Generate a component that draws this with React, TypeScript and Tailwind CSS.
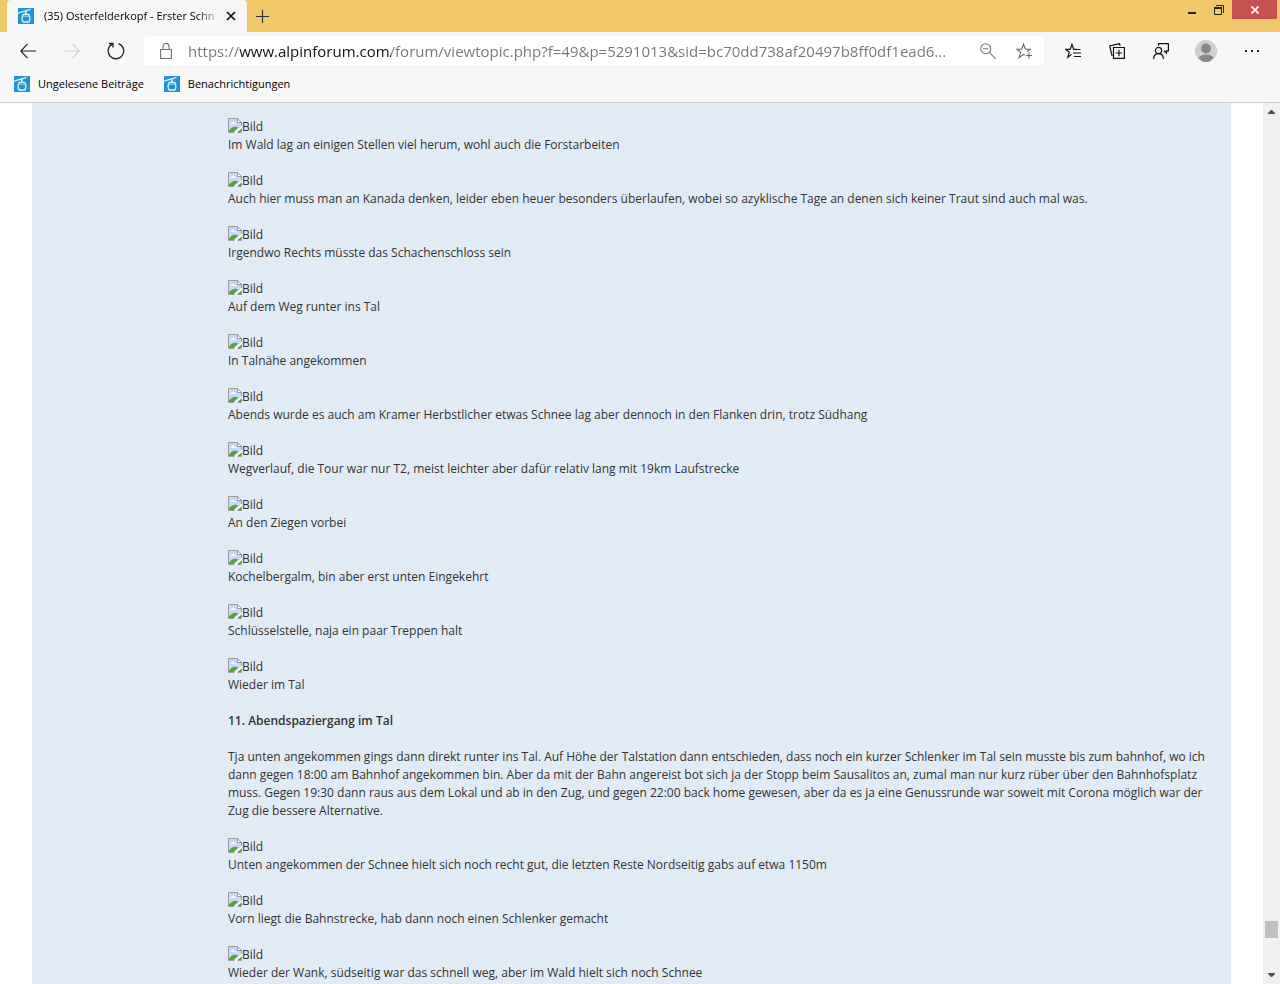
const captionsBefore = [
  "Im Wald lag an einigen Stellen viel herum, wohl auch die Forstarbeiten",
  "Auch hier muss man an Kanada denken, leider eben heuer besonders überlaufen, wobei so azyklische Tage an denen sich keiner Traut sind auch mal was.",
  "Irgendwo Rechts müsste das Schachenschloss sein",
  "Auf dem Weg runter ins Tal",
  "In Talnähe angekommen",
  "Abends wurde es auch am Kramer Herbstlicher etwas Schnee lag aber dennoch in den Flanken drin, trotz Südhang",
  "Wegverlauf, die Tour war nur T2, meist leichter aber dafür relativ lang mit 19km Laufstrecke",
  "An den Ziegen vorbei",
  "Kochelbergalm, bin aber erst unten Eingekehrt",
  "Schlüsselstelle, naja ein paar Treppen halt",
  "Wieder im Tal",
];

const captionsAfter = [
  "Unten angekommen der Schnee hielt sich noch recht gut, die letzten Reste Nordseitig gabs auf etwa 1150m",
  "Vorn liegt die Bahnstrecke, hab dann noch einen Schlenker gemacht",
  "Wieder der Wank, südseitig war das schnell weg, aber im Wald hielt sich noch Schnee",
];

function Favicon() {
  return (
    <svg viewBox="0 0 16 16" className="w-4 h-4 shrink-0" fill="none">
      <rect width="16" height="16" fill="#2093d2" />
      <path d="M0 5.2 12.500 1.300" stroke="#d9f2fc" strokeWidth="1.4" />
      <path d="M7.800 3v3.500" stroke="#e8f8ff" strokeWidth="1.5" />
      <path
        d="M5.300 6.500h5.400q1.200 1.500 1.200 3.800T10.700 14H5.300q-1.200-1.400-1.200-3.700T5.300 6.500Z"
        stroke="#d9f2fc"
        strokeWidth="1.3"
      />
      <path d="M4.800 8.500h6.400" stroke="#8fd0f0" strokeWidth=".8" />
    </svg>
  );
}

function BrokenImage() {
  return (
    <svg viewBox="0 0 14 15" className="w-3.5 h-[15px] shrink-0" fill="none">
      <path d="M.5.5h9l4 4v10H.5Z" fill="#c5d8f5" stroke="#9b9b9b" />
      <path d="M9.5.5v4h4Z" fill="#fff" stroke="#9b9b9b" />
      <path d="M2.5 6q.2-1.6 1.6-1.5Q5 2.900 6.300 4.200 7.800 4.400 7.500 6Z" fill="#fff" />
      <path d="M1 14v-1.500Q3.500 9 7.500 8.700q2 .2 2.500 1L5.500 14Z" fill="#4fa73c" />
      <path d="M14 7.500 6 15h2.500L14 10Z" fill="#fff" />
      <path d="M9.500 14 13 11v3Z" fill="#4fa73c" />
    </svg>
  );
}

function Picture({ caption }: { caption: string }) {
  return (
    <figure className="mb-[18px]">
      <div className="flex items-start h-[18px]">
        <BrokenImage />
        <span>Bild</span>
      </div>
      <figcaption>{caption}</figcaption>
    </figure>
  );
}

function TabBar() {
  return (
    <header className="flex h-8 shrink-0 bg-[#f0c869] pl-[7px] pr-[3px]">
      <div className="flex items-center w-60 bg-[#f7f7f7] rounded-t pl-[11px] pr-2">
        <Favicon />
        <span className="ml-2.5 flex-1 text-[11px] whitespace-nowrap mask-r-from-85%">
          (35) Osterfelderkopf - Erster Schn
        </span>
        <button aria-label="Tab schließen" className="w-4 h-4 flex items-center justify-center">
          <svg viewBox="0 0 10 10" className="w-2.5 h-2.5" stroke="#111" strokeWidth="1.7">
            <path d="m1 1 8 8M9 1 1 9" />
          </svg>
        </button>
      </div>
      <button aria-label="Neuer Tab" className="w-[30px] flex items-center justify-center">
        <svg viewBox="0 0 13 13" className="w-[13px] h-[13px]" stroke="#333" strokeWidth="1.2">
          <path d="M6.500 0v13M0 6.500h13" />
        </svg>
      </button>
      <div className="ml-auto flex h-[19px]">
        <button aria-label="Minimieren" className="w-[26px] flex items-center justify-center">
          <svg viewBox="0 0 8 10" className="w-2 h-2.5" fill="#222">
            <path d="M0 7h8v2H0Z" />
          </svg>
        </button>
        <button aria-label="Verkleinern" className="w-[27px] flex items-center justify-center">
          <svg viewBox="0 0 10 10" className="w-2.5 h-2.5" fill="none" stroke="#222">
            <path d="M.5 2.500h7v7h-7Z" />
            <path d="M0 3h8" strokeWidth="2" />
            <path d="M2 .5h7.500V8" />
          </svg>
        </button>
        <button aria-label="Schließen" className="w-[45px] flex items-center justify-center bg-[#c75050]">
          <svg viewBox="0 0 8 8" className="w-2 h-2" stroke="#fff" strokeWidth="1.700">
            <path d="m.5.5 7 7M7.500.5l-7 7" />
          </svg>
        </button>
      </div>
    </header>
  );
}

function AddressBar() {
  return (
    <div className="ml-2 flex flex-1 items-center h-[30px] bg-white rounded-sm shadow-xs pl-4 pr-3">
      <svg viewBox="0 0 12 16" className="w-3 h-4 shrink-0" fill="none" stroke="#707070" strokeWidth="1.100">
        <path d="M.6 6.500h10.800v9H.6ZM3 6.500V3.500a3 3 0 0 1 6 0v3" />
      </svg>
      {/* the gradient darkens only the host name */}
      <input
        type="text"
        aria-label="Adresse"
        readOnly
        value="https://www.alpinforum.com/forum/viewtopic.php?f=49&p=5291013&sid=bc70dd738af20497b8ff0df1ead6..."
        className="ml-4 mr-4 min-w-0 flex-1 outline-none text-[15px] text-transparent bg-clip-text bg-[linear-gradient(to_right,#757575_51px,#111_51px,#111_203px,#757575_203px)]"
      />
      <button aria-label="Zoom" className="mr-5">
        <svg viewBox="0 0 16 16" className="w-4 h-4" fill="none" stroke="#767676" strokeWidth="1.100">
          <circle cx="5.700" cy="5.700" r="5" />
          <path d="M3 5.700h5.400M9.300 9.300 15.700 15.700" />
        </svg>
      </button>
      <button aria-label="Zu Favoriten hinzufügen">
        <svg viewBox="0 0 16 16" className="w-4 h-4" fill="none" stroke="#666" strokeWidth="1.100">
          <path d="M8.800 12.300 7.500 11.500 3.100 14.600 4.700 9.300.8 6.200h4.900L7.500 1.200l1.900 5h4.900l-3.500 2.700" />
          <path d="M13 9.500v6M10 12.500h6" />
        </svg>
      </button>
    </div>
  );
}

function Toolbar() {
  return (
    <nav className="flex items-center h-[38px] pl-2 pr-[5px]">
      <div className="flex gap-1">
        <button aria-label="Zurück" className="w-10 flex items-center justify-center">
          <svg viewBox="0 0 16 16" className="w-4 h-4" fill="none" stroke="#222" strokeWidth="1.200">
            <path d="M7.500.8.8 8l6.700 7.200M.8 8H16" />
          </svg>
        </button>
        <button aria-label="Vorwärts" disabled className="w-10 flex items-center justify-center">
          <svg viewBox="0 0 16 16" className="w-4 h-4" fill="none" stroke="#cfcfcf" strokeWidth="1.200">
            <path d="m8.500.8 6.700 7.200-6.700 7.200M15.200 8H0" />
          </svg>
        </button>
        <button aria-label="Aktualisieren" className="w-10 flex items-center justify-center">
          <svg viewBox="0 0 18 18" className="w-[18px] h-[18px]" fill="none" stroke="#222" strokeWidth="1.300">
            <path d="M11.500 1.600a7.800 7.800 0 1 1-6.300.5M2 1.500h4v4" />
          </svg>
        </button>
      </div>
      <AddressBar />
      <div className="ml-[7px] flex">
        <button aria-label="Favoriten" className="w-11 flex items-center justify-center">
          <svg viewBox="0 0 16 16" className="w-4 h-4" fill="none" stroke="#111" strokeWidth="1.200">
            <path d="M6.500 11.400 2.800 14.300 4.300 9.300.8 6.400h4.400L6.900 1.300l1.800 5.100h3" />
            <path d="M9 6.500h6.500M8 10h8M9 13.500h7" />
          </svg>
        </button>
        <button aria-label="Sammlungen" className="w-11 flex items-center justify-center">
          <svg viewBox="0 0 16 16" className="w-4 h-4" fill="none" stroke="#111" strokeWidth="1.200">
            <path d="M4.500 4.500h10.900v10.900H4.500ZM10 6.800v6.400M6.800 10h6.400" />
            <path d="M3.200 13.200.6 3 10.500.6l.6 2.200" />
          </svg>
        </button>
        <button aria-label="Feedback senden" className="w-11 flex items-center justify-center">
          <svg viewBox="0 0 16 16" className="w-4 h-4" fill="none" stroke="#111" strokeWidth="1.200">
            <circle cx="5.500" cy="7.500" r="3.100" />
            <path d="M.6 16q.2-5.300 4.900-5.300t4.900 5.300M5.500 2.800V.6h9.900v7.200h-1.900v2.400l-2.500-2.400" />
          </svg>
        </button>
        <button aria-label="Profil" className="w-[46px] flex items-center justify-center">
          <svg viewBox="0 0 22 22" className="w-[22px] h-[22px]">
            <circle cx="11" cy="11" r="11" fill="#d2d0ce" />
            <circle cx="11" cy="8.500" r="5" fill="#8a8886" />
            <path d="M3.500 17.500q2.500-3 7.500-3t7.500 3Q15.500 22 11 22t-7.500-4.500Z" fill="#8a8886" />
          </svg>
        </button>
        <button aria-label="Einstellungen und mehr" className="w-[46px] flex items-center justify-center">
          <svg viewBox="0 0 16 4" className="w-4 h-1" fill="#222">
            <path d="M1 1h2v2H1ZM7 1h2v2H7ZM13 1h2v2h-2Z" />
          </svg>
        </button>
      </div>
    </nav>
  );
}

function Bookmarks() {
  return (
    <nav className="flex items-center gap-5 h-7 pl-3.5 text-[11px] text-black">
      <a href="#ungelesen" className="flex items-center gap-2">
        <Favicon />
        Ungelesene Beiträge
      </a>
      <a href="#benachrichtigungen" className="flex items-center gap-2">
        <Favicon />
        Benachrichtigungen
      </a>
    </nav>
  );
}

function ScrollBar() {
  return (
    <div className="w-[17px] shrink-0 flex flex-col items-center bg-[#f0f0f0] py-[7px]">
      <svg viewBox="0 0 7 4" className="w-[7px] h-1" fill="#505050">
        <path d="M3 0h1l3 3v1H0V3Z" />
      </svg>
      <div className="flex-1" />
      <div className="w-[13px] h-[17px] bg-[#c1c1c1] mb-[35px]" />
      <svg viewBox="0 0 7 4" className="w-[7px] h-1" fill="#505050">
        <path d="M3 4h1l3-3V0H0v1Z" />
      </svg>
    </div>
  );
}

export default function App() {
  return (
    <div className="h-screen flex flex-col overflow-hidden bg-white font-['Open_Sans','Noto_Sans',sans-serif]">
      <TabBar />
      <div className="shrink-0 bg-[#f7f7f7] border-b border-[#cccccc] pb-1">
        <Toolbar />
        <Bookmarks />
      </div>
      <div className="flex flex-1 min-h-0">
        <main className="flex-1 min-w-0 ml-8 mr-8 bg-[#e1ebf5] overflow-hidden">
          <article className="ml-49 mr-1 pt-[15px] text-xs leading-[18px] text-[#333333]">
            {captionsBefore.map((caption) => (
              <Picture key={caption} caption={caption} />
            ))}
            <h3 className="font-semibold mb-[18px]">11. Abendspaziergang im Tal</h3>
            <p className="mb-[18px]">
              Tja unten angekommen gings dann direkt runter ins Tal. Auf Höhe der Talstation dann entschieden, dass noch ein kurzer Schlenker im Tal sein musste bis zum bahnhof, wo ich
              <br />
              dann gegen 18:00 am Bahnhof angekommen bin. Aber da mit der Bahn angereist bot sich ja der Stopp beim Sausalitos an, zumal man nur kurz rüber über den Bahnhofsplatz
              <br />
              muss. Gegen 19:30 dann raus aus dem Lokal und ab in den Zug, und gegen 22:00 back home gewesen, aber da es ja eine Genussrunde war soweit mit Corona möglich war der
              <br />
              Zug die bessere Alternative.
            </p>
            {captionsAfter.map((caption) => (
              <Picture key={caption} caption={caption} />
            ))}
          </article>
        </main>
        <ScrollBar />
      </div>
    </div>
  );
}
